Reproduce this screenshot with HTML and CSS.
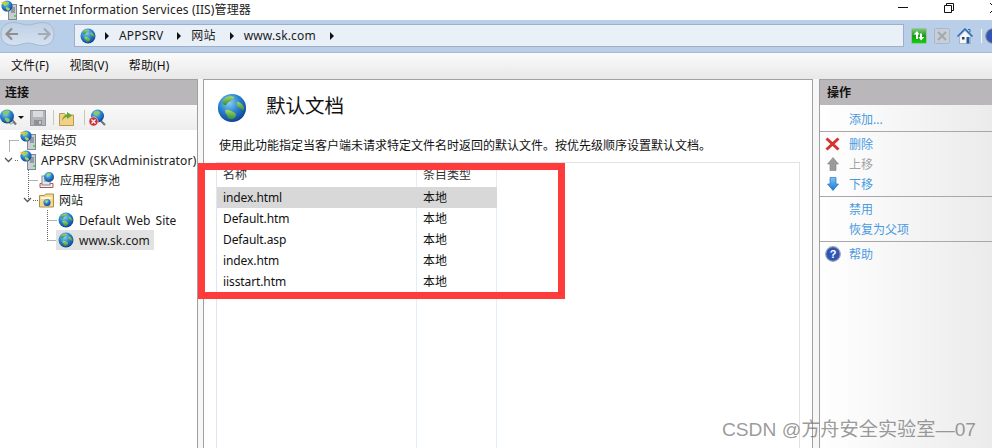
FILE: index.html
```html
<!DOCTYPE html>
<html lang="zh-CN">
<head>
<meta charset="utf-8">
<title>Internet Information Services (IIS)管理器</title>
<link rel="stylesheet" href="styles.css">
</head>
<body>
<svg class="defs" width="0" height="0" aria-hidden="true">
  <defs>
    <radialGradient id="sea" cx="0.4" cy="0.3" r="0.8">
      <stop offset="0" stop-color="#8fd0f5"/>
      <stop offset="0.45" stop-color="#2a86d0"/>
      <stop offset="1" stop-color="#0c2f86"/>
    </radialGradient>
    <linearGradient id="land" x1="0" y1="0" x2="0" y2="1">
      <stop offset="0" stop-color="#a8d868"/>
      <stop offset="1" stop-color="#2f8f3a"/>
    </linearGradient>
    <linearGradient id="grnbtn" x1="0" y1="0" x2="0" y2="1">
      <stop offset="0" stop-color="#7ccf7c"/>
      <stop offset="0.5" stop-color="#1a9a1a"/>
      <stop offset="1" stop-color="#04dc04"/>
    </linearGradient>
    <linearGradient id="blueArrow" x1="0" y1="0" x2="0" y2="1">
      <stop offset="0" stop-color="#7cc4f4"/>
      <stop offset="1" stop-color="#1478d4"/>
    </linearGradient>
    <linearGradient id="navFill" x1="0" y1="0" x2="0" y2="1">
      <stop offset="0" stop-color="#bfd1e6"/>
      <stop offset="1" stop-color="#d4e1f0"/>
    </linearGradient>
    <symbol id="globe" viewBox="0 0 32 32">
      <circle cx="16" cy="16" r="15" fill="url(#sea)"/>
      <path d="M8 6c3-3 8-3 10-2 1 2-1 3-3 4-1 2-3 1-4 3-1 3-4 2-5 0-.5-2 0-4 2-5z" fill="url(#land)"/>
      <path d="M22 9c3 1 6 4 7 7 0 3-2 3-3 1-2-1-5-2-5-5 0-1 0-2 1-3z" fill="url(#land)"/>
      <path d="M9 18c3-1 8 1 11 4 1 2-1 5-4 6-3 0-5-1-5-4-1-2-3-3-2-6z" fill="url(#land)"/>
    </symbol>
    <symbol id="server" viewBox="0 0 16 20">
      <rect x="7.500" y="4.500" width="8" height="15" fill="#c9ced2" stroke="#7f8a92"/>
      <path d="M10 8h4M10 10h4M10 12h4" stroke="#5d6870"/>
      <rect x="13" y="15" width="2" height="2" fill="#5fd04a"/>
      <circle cx="6" cy="6" r="5.600" fill="url(#sea)"/>
      <path d="M3 3c2-1.500 4-1.500 5-.5 0 1.500-2 2-3 3-1 1-3 .5-2-2.500zM5 7c2 0 4 1 4 2.500-1 1.500-3 1.500-3.500 0-.5-.5-1-1.500-.5-2.500z" fill="#9fd45c"/>
      <path d="M0 1.500l3 1 1-2 .5 3-3 1z" fill="#f4c22b"/>
    </symbol>
  </defs>
</svg>

<header class="titlebar">
  <svg class="title-icon" width="16" height="20"><use href="#server"/></svg>
  <span class="title-text">Internet Information Services (IIS)管理器</span>
  <div class="win-controls">
    <svg class="win-min" width="10" height="1"><path d="M0 .5h10" stroke="#111"/></svg>
    <svg class="win-max" width="10" height="10"><path d="M.5 2.500h7v7h-7zM2.500 2.500v-2h7v7h-2" fill="none" stroke="#111"/></svg>
    <svg class="win-close" width="10" height="10"><path d="M0 0l10 10M10 0L0 10" stroke="#111"/></svg>
  </div>
</header>

<nav class="addressbar">
  <svg class="nav-oval" width="55" height="26" viewBox="0 0 55 26">
    <path d="M1 13C1 6 5 1.500 14 1.500c6 0 9 2.500 14 2.500s8-2.500 14-2.500c8 0 12 4.500 12 11.500s-4 11.500-12 11.500c-6 0-9-2.500-14-2.500s-8 2.500-14 2.500C5 24.500 1 20 1 13z" fill="url(#navFill)" stroke="#a9b9cc"/>
    <path d="M12 7.500L6.500 13l5.500 5.500M7 13h11" fill="none" stroke="#8f8f8f" stroke-width="2.200"/>
    <path d="M44 7.500L49.500 13 44 18.500M49 13H38" fill="none" stroke="#a4abb3" stroke-width="2.200"/>
  </svg>
  <div class="crumbs">
    <svg class="crumb-globe" width="16" height="16"><use href="#globe"/></svg>
    <i class="tri"></i><span class="crumb">APPSRV</span>
    <i class="tri"></i><span class="crumb">网站</span>
    <i class="tri"></i><span class="crumb">www.sk.com</span>
    <i class="tri"></i>
  </div>
  <div class="addr-tools">
    <svg width="16" height="16" viewBox="0 0 16 16"><rect x=".5" y=".5" width="15" height="15" rx="1" fill="url(#grnbtn)" stroke="#a8bca8"/><path d="M6 3L2.500 6.500H5V11h2V6.500h1.500zM10 12.500l3.500-3.500H11V5.500H9V9H7.500z" fill="#fff"/></svg>
    <svg width="16" height="16" viewBox="0 0 16 16"><rect x=".5" y=".5" width="15" height="15" rx="1" fill="#c5cfd9" stroke="#aeb7c0"/><path d="M4 4l8 8M12 4l-8 8" stroke="#a4a9ae" stroke-width="2.200"/></svg>
    <svg width="16" height="16" viewBox="0 0 16 16"><path d="M2.500 8v7.500h11V8L8 2.500z" fill="#f6f7f8" stroke="#8fa3b8" stroke-width=".7"/><path d="M.5 8.500L8 1l7.500 7.500" fill="none" stroke="#2f66b0" stroke-width="1.500"/><path d="M11 1.500h2v3" fill="none" stroke="#2f66b0"/><rect x="9.500" y="9" width="3" height="6.500" fill="#1f5ea0"/><rect x="5" y="9" width="2.500" height="2.500" fill="#34424f"/></svg>
    <i class="tool-sep"></i>
    <svg class="help-globe" width="16" height="16" viewBox="0 0 16 16"><circle cx="8" cy="8" r="7.300" fill="#2f55b8" stroke="#8a8e96" stroke-width="1.200"/></svg>
  </div>
</nav>

<div class="menubar">
  <span class="menu-item">文件(F)</span>
  <span class="menu-item">视图(V)</span>
  <span class="menu-item">帮助(H)</span>
</div>

<main class="workspace">
  <aside class="conn-panel">
    <h2 class="panel-head">连接</h2>
    <div class="conn-tools">
      <svg class="t-globe" width="17" height="18" viewBox="0 0 17 18"><path d="M12 11l4 4.500" stroke="#6e7479" stroke-width="2.200"/><circle cx="11" cy="13" r="2" fill="#dfe3e6" stroke="#7a8086" stroke-width=".7"/><circle cx="7" cy="7.500" r="7" fill="url(#sea)"/><path d="M3 3c2-2 5-2 7-1 0 2-2 2-3 3.500-2 1-4 0-4-2.500zM5 9c2-.5 4 .5 5 2-.5 2-2 2.500-3 2-1-1-2.500-2-2-4z" fill="#8ccb58"/></svg>
      <i class="drop"></i>
      <svg class="t-save" width="16" height="16" viewBox="0 0 16 16"><rect x=".5" y=".5" width="15" height="15" fill="#b2b5b8" stroke="#94989c"/><rect x="3" y="1" width="10" height="6" fill="#d9dadb"/><rect x="4" y="10" width="8" height="5" fill="#8d9195"/><rect x="9" y="11" width="2" height="3" fill="#c8c8c8"/></svg>
      <i class="t-sep"></i>
      <svg class="t-folder" width="15" height="16" viewBox="0 0 15 16"><path d="M.5 3.500h5l1 1.500h8v10.500H.5z" fill="#f2d184" stroke="#b69a55"/><path d="M3 11c.5-4 2.500-6 5-6.500V2l5 3.500L8 9V6.800C6 7 4.500 8.500 3 11z" fill="#5cab2d"/></svg>
      <i class="t-sep"></i>
      <svg class="t-stop" width="18" height="18" viewBox="0 0 18 18"><path d="M13 12l4 4" stroke="#6e7479" stroke-width="2.200"/><circle cx="9.500" cy="7" r="6.500" fill="url(#sea)"/><path d="M6 3c2-1.500 4-1 6 0 0 2-2 2-3 3-2 .5-4-1-3-3z" fill="#8ccb58"/><circle cx="5.500" cy="12.500" r="4.500" fill="#c8303a" stroke="#f3d3d3" stroke-width=".7"/><path d="M3.500 10.500l4 4M7.500 10.500l-4 4" stroke="#fff" stroke-width="1.200"/></svg>
    </div>
    <div class="tree">
      <svg class="tree-lines" width="100" height="120"><path d="M9.500 10.500h10M9.500 10.500v12M28.500 40v30M28.500 50.500h10M33 70.500h6M47.500 80v30.500M47.500 90.500h9M47.500 110.500h9M15 30.500h4" fill="none" stroke="#666" stroke-dasharray="1 1"/></svg>
      <div class="tree-row lv0"><svg width="16" height="20"><use href="#server"/></svg><span>起始页</span></div>
      <div class="tree-row lv0">
        <svg class="chev" width="9" height="6"><path d="M1 1l3.500 3.500L8 1" fill="none" stroke="#555" stroke-width="1.300"/></svg>
        <svg width="16" height="20"><use href="#server"/></svg><span class="en-wide">APPSRV (SK\Administrator)</span></div>
      <div class="tree-row lv1"><svg width="16" height="18" viewBox="0 0 16 18"><path d="M1 12.500h13v4H1z" fill="#f0f0f0" stroke="#b0544c"/><rect x="3" y="5" width="8" height="9" fill="#e2e5e8" stroke="#7f8a92"/><path d="M5 8h4M5 10h4" stroke="#7f8a92"/><circle cx="10" cy="6" r="5" fill="url(#sea)"/><path d="M8 3c2-1 3-1 4 0-.5 2-2 1.500-3 3-1 0-2-1-1-3z" fill="#9fd45c"/></svg><span>应用程序池</span></div>
      <div class="tree-row lv1">
        <svg class="chev" width="9" height="6"><path d="M1 1l3.500 3.500L8 1" fill="none" stroke="#555" stroke-width="1.300"/></svg>
        <svg width="15" height="15" viewBox="0 0 15 15"><path d="M.5 2.500h5l1-1.500h8v13H.5z" fill="#f3d88e" stroke="#a8914e"/><rect x="2" y="4" width="11" height="2" fill="#fdf4d3"/><circle cx="8" cy="9.500" r="3.500" fill="url(#sea)"/><path d="M6.500 8c1-1 2-1 3 0-.5 1-1 1-2 2-1 0-1.500-1-1-2z" fill="#9fd45c"/></svg><span>网站</span></div>
      <div class="tree-row lv2"><svg width="16" height="16"><use href="#globe"/></svg><span class="en-words">Default Web Site</span></div>
      <div class="tree-row lv2 selected"><svg width="16" height="16"><use href="#globe"/></svg><span>www.sk.com</span></div>
    </div>
  </aside>

  <section class="center-panel">
    <div class="page-head">
      <svg width="30" height="30"><use href="#globe"/></svg>
      <h1>默认文档</h1>
    </div>
    <p class="desc">使用此功能指定当客户端未请求特定文件名时返回的默认文件。按优先级顺序设置默认文档。</p>
    <div class="listview">
      <div class="lv-table">
        <div class="lv-row lv-header"><span>名称</span><span>条目类型</span></div>
        <div class="lv-row is-selected"><span>index.html</span><span>本地</span></div>
        <div class="lv-row"><span>Default.htm</span><span>本地</span></div>
        <div class="lv-row"><span>Default.asp</span><span>本地</span></div>
        <div class="lv-row"><span>index.htm</span><span>本地</span></div>
        <div class="lv-row"><span>iisstart.htm</span><span>本地</span></div>
      </div>
    </div>
  </section>

  <aside class="actions-panel">
    <h2 class="panel-head">操作</h2>
    <div class="act-group">
      <div class="act"><span>添加...</span></div>
    </div>
    <div class="act-group">
      <div class="act"><svg class="ic-x" width="15" height="14" viewBox="0 0 15 14"><path d="M1.500 1.500l12 11M13.500 1.500l-12 11" stroke="#d8302a" stroke-width="3"/></svg><span>删除</span></div>
      <div class="act is-off"><svg class="ic-arrow" width="12" height="14" viewBox="0 0 12 14"><path d="M6 .5l5.500 6.500H9v6.500H3V7H.5z" fill="#9b9b9b" stroke="#858585" stroke-width=".6"/></svg><span>上移</span></div>
      <div class="act"><svg class="ic-arrow" width="12" height="14" viewBox="0 0 12 14"><path d="M6 13.500L.5 7H3V.5h6V7h2.500z" fill="url(#blueArrow)" stroke="#1468b8" stroke-width=".6"/></svg><span>下移</span></div>
    </div>
    <div class="act-group">
      <div class="act"><span>禁用</span></div>
      <div class="act"><span>恢复为父项</span></div>
    </div>
    <div class="act-group">
      <div class="act"><svg class="ic-help" width="16" height="16" viewBox="0 0 16 16"><circle cx="8" cy="8" r="7.300" fill="#2f55b8" stroke="#a0a4ac" stroke-width="1.200"/><text x="8" y="12" class="q-mark">?</text></svg><span>帮助</span></div>
    </div>
  </aside>
</main>

<div class="red-box"></div>
<div class="watermark">CSDN @方舟安全实验室—07</div>
</body>
</html>
```
FILE: styles.css
```css
* { box-sizing: border-box; }
html, body { margin: 0; padding: 0; }
body {
  position: relative;
  width: 992px;
  height: 448px;
  overflow: hidden;
  background: #fff;
  color: #111;
  font: 12px/20px "Noto Sans", "Noto Sans CJK SC", sans-serif;
  display: flex;
  flex-direction: column;
}
.defs { position: absolute; }
svg { display: block; flex: none; }

.titlebar {
  height: 20px;
  flex: none;
  display: flex;
  align-items: center;
  padding-left: 1px;
  overflow: hidden;
}
.title-text { margin-left: 2px; font-size: 12px; letter-spacing: .13px; color: #222; }
.win-controls { margin-left: auto; align-self: flex-start; display: flex; align-items: center; gap: 36px; margin-right: -8px; height: 16px; }
.win-min { margin-bottom: 2px; }

.addressbar {
  height: 33px;
  flex: none;
  background: #b9cfe9;
  border-bottom: 1px solid #a5bad3;
  display: flex;
  align-items: center;
}
.nav-oval { margin-bottom: 5px; }
.crumbs {
  flex: none;
  margin: 0 0 1px 19px;
  width: 830px;
  height: 23px;
  background: #e9f0f8;
  border: 1px solid #9fb0c4;
  display: flex;
  align-items: center;
  padding-left: 5px;
  color: #1c1c1c;
}
.crumb-globe { margin-right: 9px; }
.tri {
  flex: none;
  width: 0;
  height: 0;
  border-left: 4px solid #111;
  border-top: 4px solid transparent;
  border-bottom: 4px solid transparent;
  margin-right: 10px;
}
.crumb { margin-right: 14px; letter-spacing: .15px; }
.addr-tools { display: flex; align-items: center; gap: 7px; margin: 0 0 1px 7px; }
.tool-sep { flex: none; width: 1px; height: 14px; background: #f3f6fa; margin-left: 1px; }
.help-globe { margin-left: -4px; }

.menubar {
  height: 26px;
  flex: none;
  background: linear-gradient(#fbfbfb, #e9e8e8);
  display: flex;
  align-items: center;
  padding-left: 11px;
  gap: 20.500px;
  letter-spacing: .1px;
}

.workspace {
  flex: 1;
  display: flex;
  min-height: 0;
  gap: 5px;
  background: #f7f7f7;
}
.panel-head {
  margin: 0;
  height: 25px;
  background: #b9b7b9;
  font-size: 12px;
  font-weight: 700;
  line-height: 25px;
  padding-left: 5px;
  color: #111;
}
.conn-panel {
  width: 198px;
  flex: none;
  background: #fff;
  border-top: 1px solid #a0a0a0;
  border-right: 1px solid #a0a0a0;
}
.conn-tools {
  height: 25px;
  display: flex;
  align-items: center;
  background: linear-gradient(#f9f9f9, #eee);
}
.drop { flex: none; width: 0; height: 0; border-top: 3px solid #111; border-left: 3px solid transparent; border-right: 3px solid transparent; margin-left: 1px; }
.t-save { margin-left: 6px; }
.t-sep { flex: none; width: 1px; height: 15px; background: #c8c8b8; margin: 0 6px 0 7px; }
.t-folder { margin-right: 3px; margin-left: -1px; }
.t-stop { margin-left: -3px; }

.tree { position: relative; }
.tree-lines { position: absolute; left: 0; top: 0; }
.tree-row {
  position: relative;
  height: 20px;
  display: flex;
  align-items: center;
  white-space: nowrap;
  color: #1a1a1a;
}
.tree-row span { margin-left: 5px; padding-top: 1px; }
.en-wide { letter-spacing: .17px; word-spacing: 1px; }
.en-words { word-spacing: 2px; }
.lv0 { padding-left: 20px; }
.lv1 { padding-left: 39px; }
.lv2 { padding-left: 58px; }
.chev { margin-left: -16px; margin-right: 7px; }
.selected { width: 154px; }
.selected::before {
  content: "";
  position: absolute;
  left: 56px;
  right: 0;
  top: 0;
  bottom: 0;
  background: #e2e2e2;
}
.selected > * { position: relative; }

.center-panel {
  width: 610px;
  flex: none;
  background: #fff;
  border: 1px solid #a0a0a0;
  border-bottom: 0;
  padding: 0 12px 0 15px;
  display: flex;
  flex-direction: column;
}
.page-head { display: flex; align-items: center; height: 54px; }
.page-head svg { margin: 2px 0 0 -2px; }
.page-head h1 { margin: 0 0 2px 19px; font-size: 19.500px; font-weight: 400; color: #111; line-height: 50px; }
.desc { margin: 0; height: 28px; line-height: 24px; white-space: nowrap; }
.listview {
  flex: 1;
  border: 1px solid #e2e2e2;
  border-left-color: #dfe6f0;
  border-bottom: 0;
  margin-left: -3px;
}
.lv-table {
  width: 280px;
  height: 100%;
  background: linear-gradient(#e3ecf7, #e3ecf7) 199px 0 / 1px 100% no-repeat,
              linear-gradient(#e3ecf7, #e3ecf7) 279px 0 / 1px 100% no-repeat;
}
.lv-row { display: flex; height: 21px; line-height: 21px; }
.lv-row span:first-child { width: 199px; padding-left: 6px; letter-spacing: -.1px; }
.lv-row span:last-child { width: 81px; padding-left: 7px; }
.lv-header { height: 24px; line-height: 24px; color: #333; }
.is-selected { background: #d8d8d8; }

.actions-panel {
  flex: 1;
  margin-left: 1px;
  border-top: 1px solid #a0a0a0;
  border-left: 1px solid #a0a0a0;
  background: linear-gradient(90deg, #fff, #ebebeb);
}
.actions-panel .panel-head { padding-left: 7px; }
.act-group { border-bottom: 1px solid #a8a8a8; padding: 2px 0; }
.panel-head + .act-group { padding-top: 4px; }
.act-group:last-child { border-bottom: 0; }
.act {
  height: 20px;
  display: flex;
  align-items: center;
  padding: 2px 0 0 29px;
  position: relative;
  color: #4a9ae0;
}
.act svg { position: absolute; top: 3px; }
.ic-x { left: 5px; }
.ic-arrow { left: 7px; }
.act .ic-help { left: 5px; top: 2px; }
.is-off { color: #a3a3a3; }
.q-mark { font: 700 11px "Liberation Sans", sans-serif; fill: #fff; text-anchor: middle; }

.red-box {
  position: absolute;
  left: 198px;
  top: 163px;
  width: 367px;
  height: 136px;
  border: 7px solid #ff3b3b;
}
.watermark {
  position: absolute;
  right: 16px;
  top: 416px;
  font: 19.200px/28px "Liberation Sans", "Noto Sans CJK SC", sans-serif;
  color: rgba(110, 110, 110, 0.7);
  white-space: nowrap;
}
```
